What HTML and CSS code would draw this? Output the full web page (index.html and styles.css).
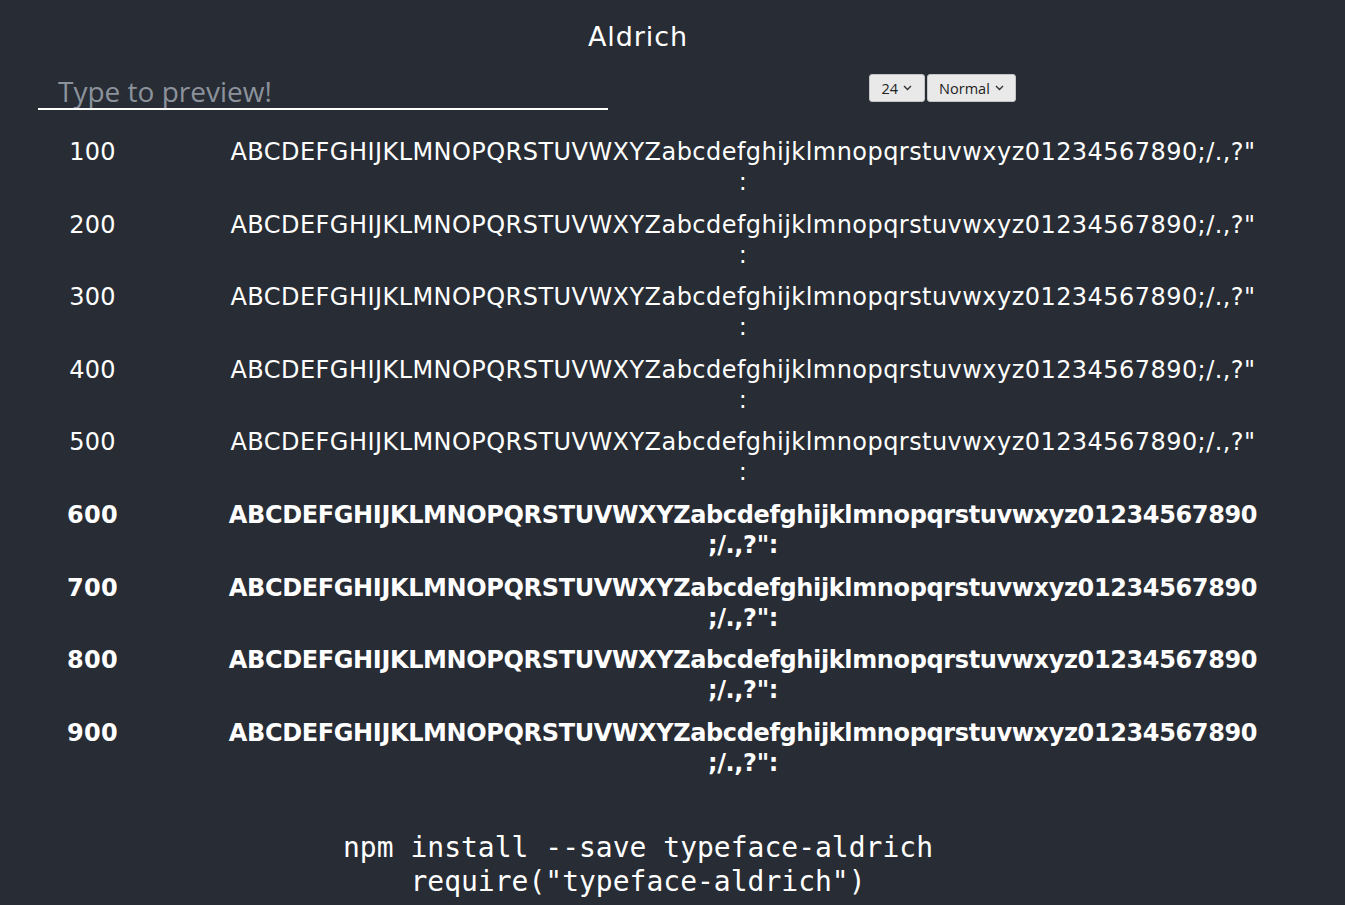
FILE: index.html
```html
<!DOCTYPE html>
<html>
<head>
<meta charset="utf-8">
<link rel="stylesheet" href="styles.css">
</head>
<body>
<div class="app">
  <h1 class="title">Aldrich</h1>
  <div class="controls">
    <input class="preview" type="text" placeholder="Type to preview!">
    <div class="selects">
      <button class="sel">24 <svg width="9" height="6" viewBox="0 0 9 6"><path d="M1 1l3.5 3.5L8 1" fill="none" stroke="#333" stroke-width="1.4"/></svg></button>
      <button class="sel">Normal <svg width="9" height="6" viewBox="0 0 9 6"><path d="M1 1l3.5 3.5L8 1" fill="none" stroke="#333" stroke-width="1.4"/></svg></button>
    </div>
  </div>
  <div class="rows">
    <div class="row"><div class="w w100">100</div><div class="s w100">ABCDEFGHIJKLMNOPQRSTUVWXYZabcdefghijklmnopqrstuvwxyz01234567890;/.,?":</div></div>
    <div class="row"><div class="w w200">200</div><div class="s w200">ABCDEFGHIJKLMNOPQRSTUVWXYZabcdefghijklmnopqrstuvwxyz01234567890;/.,?":</div></div>
    <div class="row"><div class="w w300">300</div><div class="s w300">ABCDEFGHIJKLMNOPQRSTUVWXYZabcdefghijklmnopqrstuvwxyz01234567890;/.,?":</div></div>
    <div class="row"><div class="w w400">400</div><div class="s w400">ABCDEFGHIJKLMNOPQRSTUVWXYZabcdefghijklmnopqrstuvwxyz01234567890;/.,?":</div></div>
    <div class="row"><div class="w w500">500</div><div class="s w500">ABCDEFGHIJKLMNOPQRSTUVWXYZabcdefghijklmnopqrstuvwxyz01234567890;/.,?":</div></div>
    <div class="row"><div class="w w600">600</div><div class="s w600">ABCDEFGHIJKLMNOPQRSTUVWXYZabcdefghijklmnopqrstuvwxyz01234567890;/.,?":</div></div>
    <div class="row"><div class="w w700">700</div><div class="s w700">ABCDEFGHIJKLMNOPQRSTUVWXYZabcdefghijklmnopqrstuvwxyz01234567890;/.,?":</div></div>
    <div class="row"><div class="w w800">800</div><div class="s w800">ABCDEFGHIJKLMNOPQRSTUVWXYZabcdefghijklmnopqrstuvwxyz01234567890;/.,?":</div></div>
    <div class="row"><div class="w w900">900</div><div class="s w900">ABCDEFGHIJKLMNOPQRSTUVWXYZabcdefghijklmnopqrstuvwxyz01234567890;/.,?":</div></div>
  </div>
  <div class="code">
    <div>npm install --save typeface-aldrich</div>
    <div>require("typeface-aldrich")</div>
  </div>
</div>
</body>
</html>
```
FILE: styles.css
```css
html, body {
  margin: 0;
  padding: 0;
  background: #282c34;
  color: #ffffff;
}
.app {
  width: 1276px;
  padding-bottom: 40px;
}
.title {
  margin: 0;
  padding-top: 19px;
  text-align: center;
  font-family: "DejaVu Sans", sans-serif;
  font-weight: normal;
  font-size: 27px;
  line-height: 36px;
  letter-spacing: 0.9px;
}
.controls {
  display: flex;
  align-items: flex-start;
  margin-top: 19px;
  padding-left: 38px;
}
.preview {
  height: 34px;
  box-sizing: content-box;
  padding: 0 0 0 20px;
  margin: 0;
  width: 550px;
  background: transparent;
  border: none;
  border-bottom: 2px solid #ffffff;
  outline: none;
  color: #ffffff;
  font-family: "Open Sans", sans-serif;
  font-size: 28px;
  line-height: 34px;
}
.preview::placeholder {
  color: #8b929c;
}
.selects {
  display: flex;
  gap: 2px;
  margin-left: 261px;
  margin-top: 0;
}
.sel {
  display: flex;
  align-items: center;
  gap: 5px;
  height: 28px;
  padding: 0 11.5px 0 11.5px;
  background: #e9e9e9;
  border: 1px solid #c4c4c4;
  border-radius: 3px;
  color: #222;
  font-family: "Open Sans", sans-serif;
  font-size: 14.5px;
}
.rows {
  margin-top: 27px;
  display: flex;
  flex-direction: column;
  gap: 12.6px;
}
.row {
  display: grid;
  grid-template-columns: 185px 1030px;
  column-gap: 43px;
}
.w {
  text-align: center;
  font-family: "DejaVu Sans", sans-serif;
  font-size: 24px;
  line-height: 30px;
  letter-spacing: 0.3px;
}
.s {
  text-align: center;
  font-family: "DejaVu Sans", sans-serif;
  font-size: 24px;
  line-height: 30px;
  line-break: anywhere;
  word-break: break-all;
  letter-spacing: 0.45px;
}
.w100, .w200, .w300, .w400, .w500 { font-weight: normal; }
.w600, .w700, .w800, .w900 { font-weight: bold; }
.s.w600, .s.w700, .s.w800, .s.w900 { letter-spacing: -0.37px; }
.code {
  margin-top: 53px;
  text-align: center;
  font-family: "DejaVu Sans Mono", monospace;
  font-size: 28px;
  line-height: 34px;
}
```
